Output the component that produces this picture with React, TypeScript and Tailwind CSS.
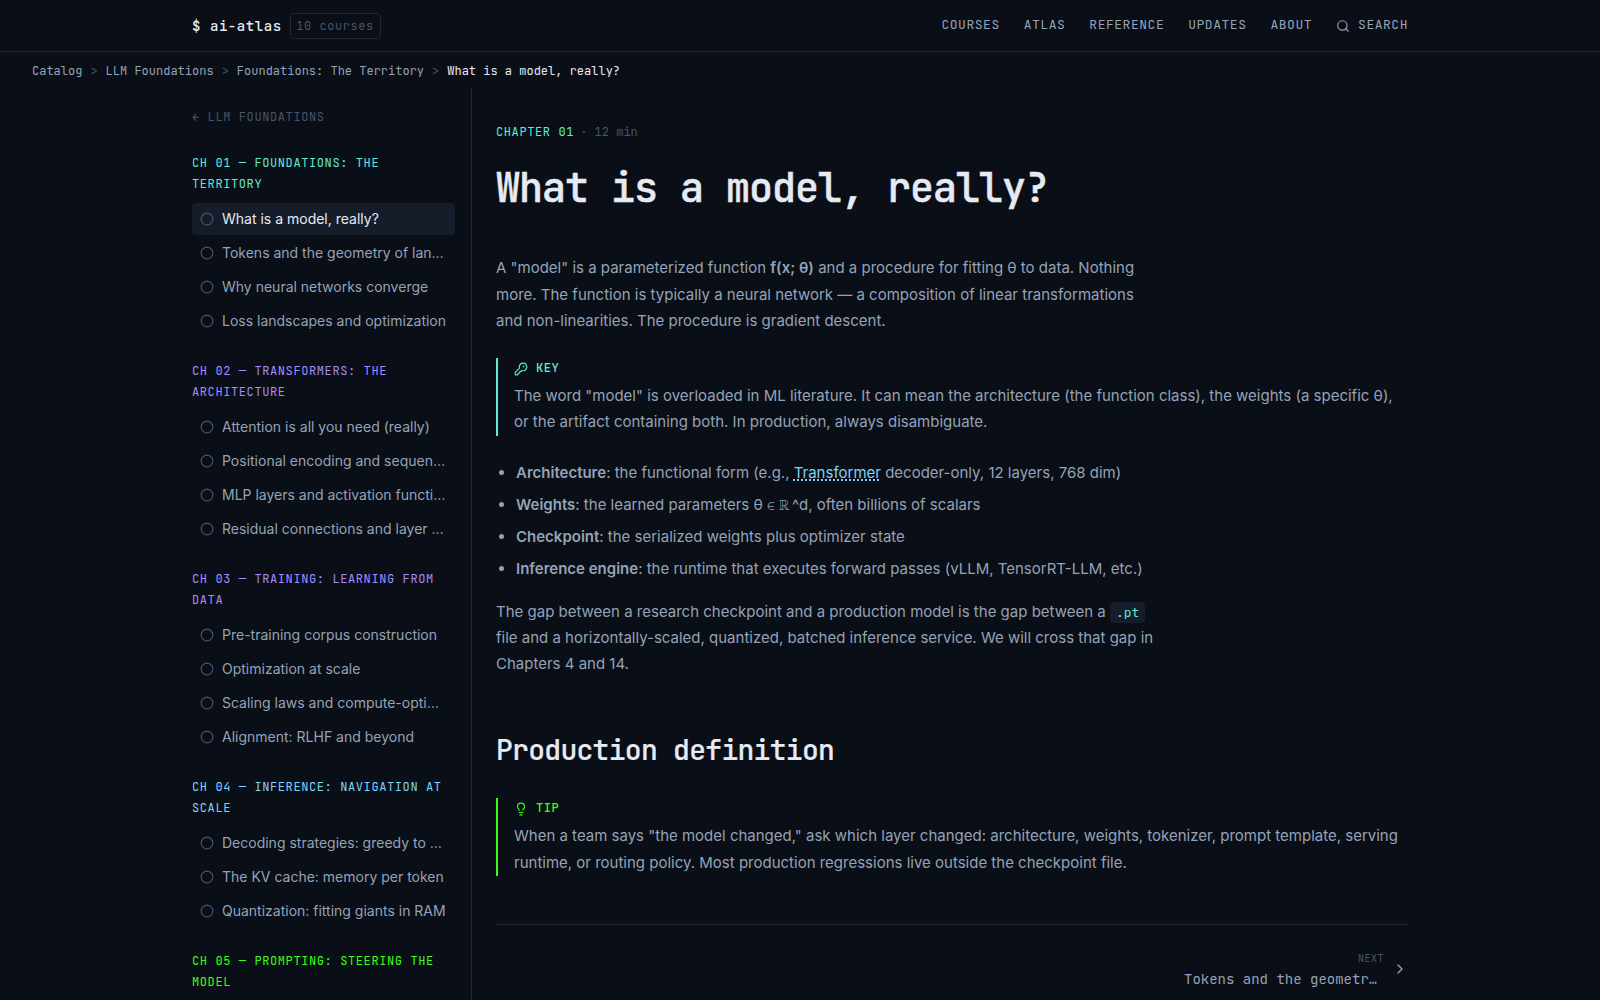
import React from "react";
import { ChevronRight, Circle, KeyRound, Lightbulb, Search } from "lucide-react";

const mono = "font-['JetBrains_Mono','DejaVu_Sans_Mono',monospace]";

const chapters = [
  {
    title: "CH 01 — FOUNDATIONS: THE TERRITORY",
    color: "text-[#5eead4]",
    lessons: [
      "What is a model, really?",
      "Tokens and the geometry of language",
      "Why neural networks converge",
      "Loss landscapes and optimization",
    ],
  },
  {
    title: "CH 02 — TRANSFORMERS: THE ARCHITECTURE",
    color: "text-[#a78bfa]",
    lessons: [
      "Attention is all you need (really)",
      "Positional encoding and sequence order",
      "MLP layers and activation functions",
      "Residual connections and layer norm",
    ],
  },
  {
    title: "CH 03 — TRAINING: LEARNING FROM DATA",
    color: "text-[#a78bfa]",
    lessons: [
      "Pre-training corpus construction",
      "Optimization at scale",
      "Scaling laws and compute-optimal training",
      "Alignment: RLHF and beyond",
    ],
  },
  {
    title: "CH 04 — INFERENCE: NAVIGATION AT SCALE",
    color: "text-[#7dd3fc]",
    lessons: [
      "Decoding strategies: greedy to speculative",
      "The KV cache: memory per token",
      "Quantization: fitting giants in RAM",
    ],
  },
  {
    title: "CH 05 — PROMPTING: STEERING THE MODEL",
    color: "text-[#39ff14]",
    lessons: ["Prompt anatomy"],
  },
];

function Header() {
  return (
    <header className="h-[52px] shrink-0 border-b border-[#1f2735]">
      <div className={`mx-auto flex h-full max-w-[1216px] items-center justify-between ${mono}`}>
        <div className="flex items-center gap-2">
          <span className="text-sm font-medium tracking-[0.04em] text-[#e6eaf3]">$ ai-atlas</span>
          <span className="flex h-[26px] items-center rounded border border-[#1f2735] px-[5.75px] text-xs tracking-[0.045em] text-[#475569]">
            10 courses
          </span>
        </div>
        <nav className="flex items-center gap-6 pb-px text-[13px] leading-5 tracking-[0.04em] text-[#94a3b8]">
          <a>COURSES</a>
          <a>ATLAS</a>
          <a>REFERENCE</a>
          <a>UPDATES</a>
          <a>ABOUT</a>
          <a className="flex items-center gap-2">
            <Search size={14} strokeWidth={2} className="mt-px" />
            SEARCH
          </a>
        </nav>
      </div>
    </header>
  );
}

function Breadcrumb() {
  return (
    <div className={`flex h-[35px] shrink-0 items-center gap-2 px-8 pt-0.5 text-xs text-[#94a3b8] ${mono}`}>
      <span>Catalog</span>
      <span className="text-[#475569]">&gt;</span>
      <span>LLM Foundations</span>
      <span className="text-[#475569]">&gt;</span>
      <span>Foundations: The Territory</span>
      <span className="text-[#475569]">&gt;</span>
      <span className="text-[#e6eaf3]">What is a model, really?</span>
    </div>
  );
}

function Sidebar() {
  return (
    <aside className="w-[280px] shrink-0 overflow-hidden border-r border-[#1f2735] pt-5 pr-4">
      <div className={`text-xs leading-[21px] tracking-[0.05em] text-[#475569] ${mono}`}>← LLM FOUNDATIONS</div>
      <div className="mt-[25px] flex flex-col gap-6">
        {chapters.map((c, ci) => (
          <section key={c.title}>
            <h3 className={`mb-2 text-xs leading-[21px] tracking-[0.05em] ${mono} ${c.color}`}>{c.title}</h3>
            <ul className="flex flex-col gap-0.5">
              {c.lessons.map((l, li) => (
                <li
                  key={l}
                  className={`flex h-8 items-center gap-2 rounded px-2 text-sm ${
                    ci === 0 && li === 0 ? "bg-[#151d2a] text-[#e6eaf3]" : "text-[#94a3b8]"
                  }`}
                >
                  <Circle size={14} strokeWidth={2} className="shrink-0 text-[#475569]" />
                  <span className="truncate">{l}</span>
                </li>
              ))}
            </ul>
          </section>
        ))}
      </div>
    </aside>
  );
}

function Callout({
  label,
  icon,
  tone,
  children,
}: {
  label: string;
  icon: React.ReactNode;
  tone: string;
  children: React.ReactNode;
}) {
  return (
    <div className={`h-[77.5px] border-l-2 pl-4 ${tone}`}>
      <div className={`flex h-5 items-center gap-2 text-xs font-medium tracking-[0.05em] ${mono}`}>
        {icon}
        {label}
      </div>
      <p className="mt-[5px] text-[15px] leading-[26.25px] text-[#94a3b8]">{children}</p>
    </div>
  );
}

function Article() {
  return (
    <main className="ml-6 min-w-0 flex-1 text-[15px] leading-[26.25px] text-[#94a3b8]">
      <div className={`mt-[35px] text-xs leading-[21px] ${mono}`}>
        <span className="tracking-[0.05em] text-[#5eead4]">CHAPTER 01</span>
        <span className="-ml-px text-[#475569]"> · 12 min</span>
      </div>
      <h1
        className={`mt-[23px] text-[40px] leading-[44px] font-medium tracking-[-0.025em] text-[#e6eaf3] [-webkit-text-stroke:0.5px_#e6eaf3] ${mono}`}
      >
        What is a model, really?
      </h1>
      <p className="mt-[45.25px] max-w-[660px]">
        A "model" is a parameterized function <strong className="font-semibold">f(x; θ)</strong> and a procedure for
        fitting θ to data. Nothing more. The function is typically a neural network — a composition of linear
        transformations and non-linearities. The procedure is gradient descent.
      </p>
      <div className="mt-6">
        <Callout label="KEY" tone="border-[#5eead4] text-[#5eead4]" icon={<KeyRound size={14} className="mt-0.5" />}>
          The word "model" is overloaded in ML literature. It can mean the architecture (the function class), the
          weights (a specific θ), or the artifact containing both. In production, always disambiguate.
        </Callout>
      </div>
      <ul className="mt-6 flex list-disc flex-col gap-[5.75px] pl-5">
        <li>
          <strong className="font-semibold">Architecture</strong>: the functional form (e.g.,{" "}
          <a className="text-[#7dd3fc] underline decoration-dotted decoration-2 underline-offset-2">Transformer</a>{" "}
          decoder-only, 12 layers, 768 dim)
        </li>
        <li>
          <strong className="font-semibold">Weights</strong>: the learned parameters θ{" "}
          <span className="font-['FreeSerif','DejaVu_Serif',serif] leading-none">∈</span>{" "}
          <span className="mr-[2.5px] font-['FreeSerif','DejaVu_Serif',serif] leading-none">ℝ</span>^d, often billions
          of scalars
        </li>
        <li>
          <strong className="font-semibold">Checkpoint</strong>: the serialized weights plus optimizer state
        </li>
        <li>
          <strong className="font-semibold">Inference engine</strong>: the runtime that executes forward passes (vLLM,
          TensorRT-LLM, etc.)
        </li>
      </ul>
      <p className="mt-[17px] max-w-[660px] leading-[26px]">
        The gap between a research checkpoint and a production model is the gap between a{" "}
        <code className={`rounded bg-[#151d2a] px-1.5 py-0.5 text-[13px] leading-none text-[#5eead4] ${mono}`}>.pt</code>{" "}
        file and a horizontally-scaled, quantized, batched inference service. We will cross that gap in Chapters 4 and
        14.
      </p>
      <h2
        className={`mt-[55px] text-[28px] leading-9 font-medium tracking-[-0.025em] text-[#e6eaf3] [-webkit-text-stroke:0.2px_#e6eaf3] ${mono}`}
      >
        Production definition
      </h2>
      <div className="mt-[30.5px]">
        <Callout label="TIP" tone="border-[#39ff14] text-[#39ff14]" icon={<Lightbulb size={14} className="mt-0.5" />}>
          When a team says "the model changed," ask which layer changed: architecture, weights, tokenizer, prompt
          template, serving runtime, or routing policy. Most production regressions live outside the checkpoint file.
        </Callout>
      </div>
      <footer className="mt-12 flex items-center justify-end gap-2 border-t border-[#1f2735] pt-6">
        <div className={`w-[200px] pt-px ${mono}`}>
          <div className="text-right text-[10px] leading-[17.5px] tracking-[0.05em] text-[#475569]">NEXT</div>
          <div className="truncate text-sm leading-[24.5px]">Tokens and the geometry of language</div>
        </div>
        <ChevronRight size={16} className="-mt-[3px]" />
      </footer>
    </main>
  );
}

export default function App() {
  return (
    <div className="flex h-screen flex-col overflow-hidden bg-[#0a0e16] font-['Inter',sans-serif]">
      <Header />
      <Breadcrumb />
      <div className="mx-auto flex min-h-0 w-[1216px] flex-1">
        <Sidebar />
        <Article />
      </div>
    </div>
  );
}
